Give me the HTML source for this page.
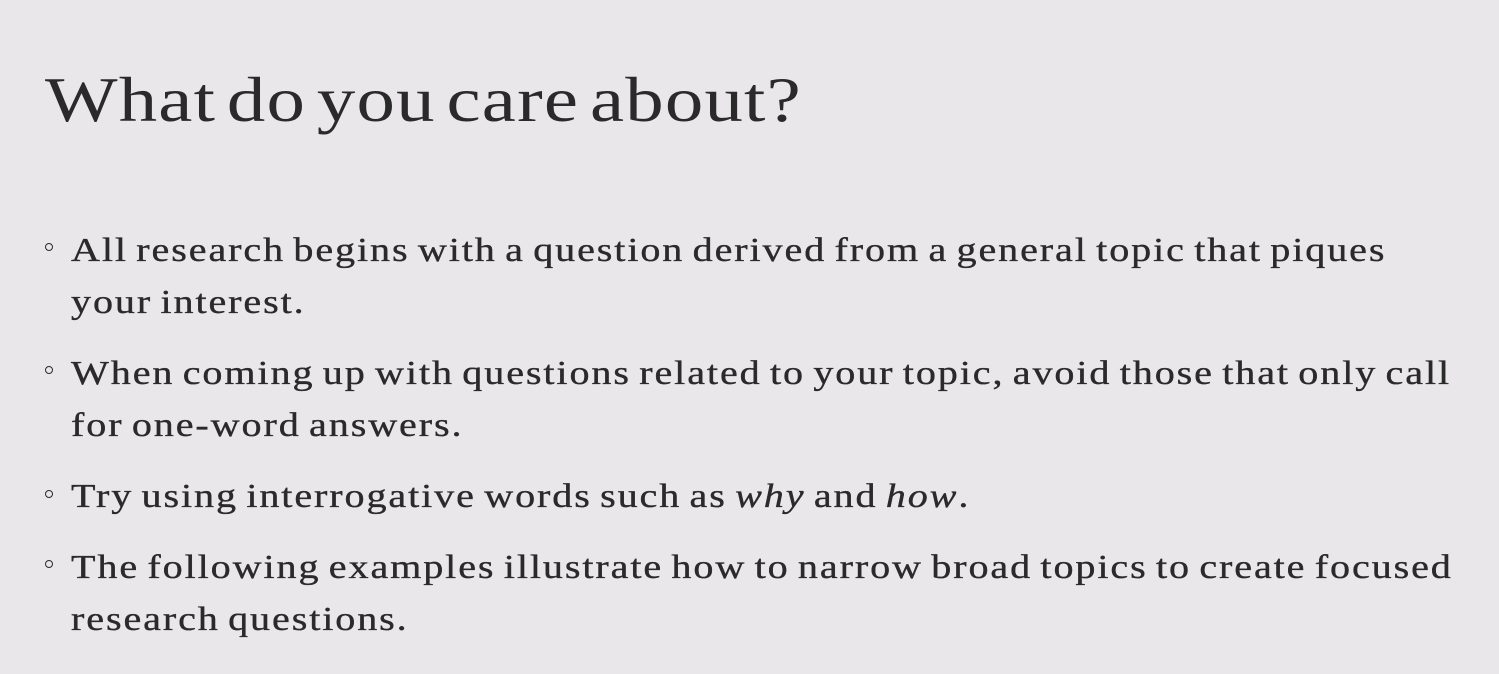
<!DOCTYPE html>
<html><head><meta charset="utf-8"><style>
html,body{margin:0;padding:0;}
body{width:1499px;height:674px;background:#e9e7e9;position:relative;overflow:hidden;font-family:"Liberation Serif",serif;color:#2b2a2b;}
.l{position:absolute;white-space:nowrap;line-height:1;transform-origin:0 0;}
.t{font-size:64px;left:45px;top:68px;letter-spacing:1px;word-spacing:-8px;transform:scaleX(1.2);}
.b{font-size:34px;left:71px;letter-spacing:1.6px;word-spacing:-3px;transform:scaleX(1.18);-webkit-text-stroke:0.35px #2b2a2b;}
.d{position:absolute;left:45px;width:6px;height:6px;border:1.7px solid #2b2a2b;border-radius:50%;}
</style></head><body>
<div class="l t">What do you care about?</div>
<div class="d" style="top:243px"></div>
<div class="l b" style="top:234px">All research begins with a question derived from a general topic that piques</div>
<div class="l b" style="top:286px">your interest.</div>
<div class="d" style="top:366px"></div>
<div class="l b" style="top:357px">When coming up with questions related to your topic, avoid those that only call</div>
<div class="l b" style="top:409px">for one-word answers.</div>
<div class="d" style="top:490px"></div>
<div class="l b" style="top:480px">Try using interrogative words such as <i>why</i> and <i>how</i>.</div>
<div class="d" style="top:560px"></div>
<div class="l b" style="top:551px">The following examples illustrate how to narrow broad topics to create focused</div>
<div class="l b" style="top:603px">research questions.</div>
</body></html>
